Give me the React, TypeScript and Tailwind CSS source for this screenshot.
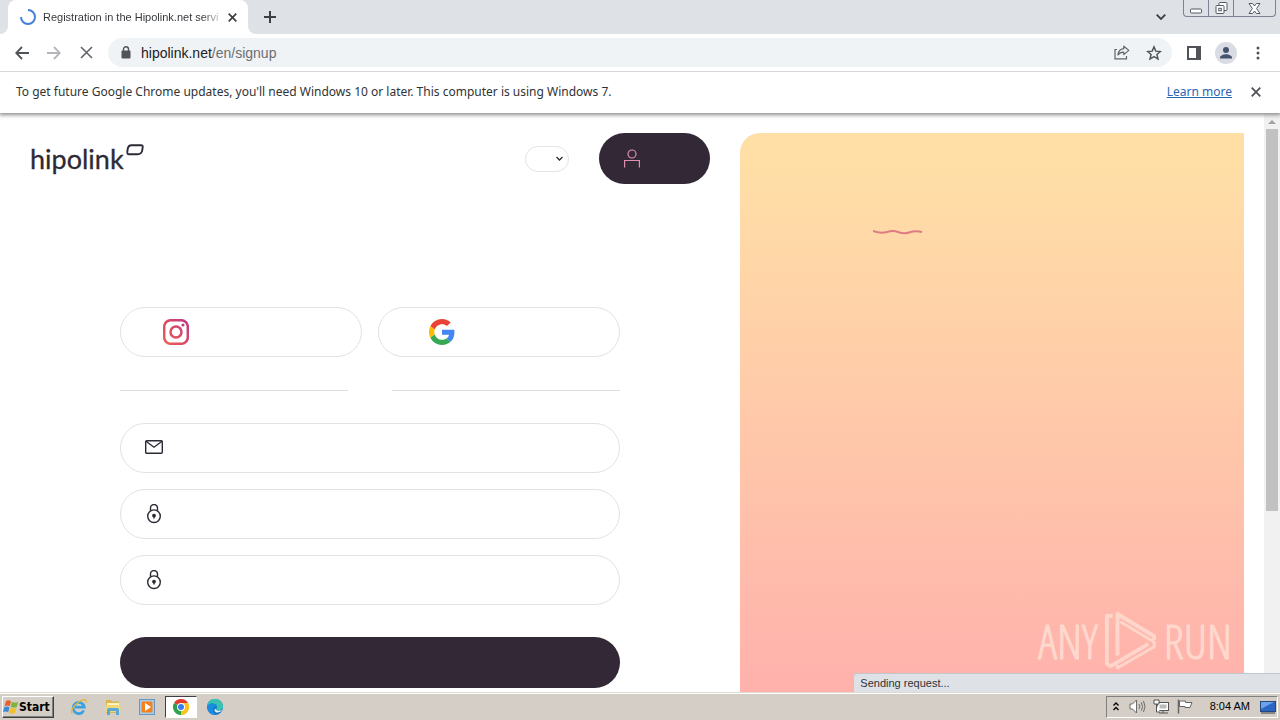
import { useState } from 'react';
import type { ReactNode } from 'react';

const WindowControls = () => (
    <div className="flex h-[17px] self-start rounded-b border border-t-0 border-[#7d8390] text-[#555a63]">
        <button aria-label="Minimize" className="flex w-[25px] items-center justify-center border-r border-[#7d8390]">
            <svg width="13" height="14" viewBox="0 0 13 14" fill="#fff" stroke="currentColor">
                <rect x="0.5" y="8" width="11" height="4" rx="1" />
            </svg>
        </button>
        <button aria-label="Restore" className="flex w-[25px] items-center justify-center border-r border-[#7d8390]">
            <svg width="13" height="14" viewBox="0 0 13 14" fill="#fff" stroke="currentColor">
                <rect x="4" y="1.5" width="8" height="8" rx="1" />
                <rect x="1" y="4.5" width="8" height="8" rx="1" />
                <rect x="3.8" y="7.3" width="2.5" height="2.5" />
            </svg>
        </button>
        <button aria-label="Close window" className="flex w-[41px] items-center justify-center">
            <svg width="13" height="13" viewBox="0 0 13 13" fill="#fff" stroke="currentColor">
                <path d="M1 1.5h3.6L6.5 4l1.9-2.5H12L8.6 6.5l3.4 5H8.4L6.5 9l-1.9 2.5H1l3.4-5z" />
            </svg>
        </button>
    </div>
);

const TabStrip = () => (
    <div className="flex h-[34px] bg-[#dee1e6] pr-1 pl-2">
        <div className="relative flex w-60 items-center rounded-t-lg bg-white pr-2 pl-3">
            <svg className="absolute bottom-0 -left-2" width="8" height="8" viewBox="0 0 8 8" fill="#fff">
                <path d="M8 0v8H0a8 8 0 0 0 8-8z" />
            </svg>
            <svg className="absolute -right-2 bottom-0" width="8" height="8" viewBox="0 0 8 8" fill="#fff">
                <path d="M0 0v8h8a8 8 0 0 1-8-8z" />
            </svg>
            <svg width="16" height="16" viewBox="0 0 16 16" fill="none" stroke="#4480d8" strokeWidth="2">
                <path d="M8 1a7 7 0 1 1-7 7" />
            </svg>
            <span className="ml-[7px] flex-1 bg-linear-to-r from-[#303336] from-90% to-[#303336]/20 bg-clip-text text-[11px] whitespace-nowrap text-transparent">
                Registration in the Hipolink.net servi
            </span>
            <button aria-label="Close tab" className="ml-1 flex h-4 w-4 shrink-0 items-center justify-center">
                <svg width="9" height="9" viewBox="0 0 9 9" stroke="#3c4043" strokeWidth="1.7">
                    <path d="M0.7 0.7l7.6 7.6M8.3 0.7L0.7 8.3" />
                </svg>
            </button>
        </div>
        <button aria-label="New tab" className="ml-2 flex w-7 items-center justify-center">
            <svg width="12" height="12" viewBox="0 0 12 12" stroke="#3c4043" strokeWidth="2">
                <path d="M6 0v12M0 6h12" />
            </svg>
        </button>
        <button aria-label="Search tabs" className="mr-2 ml-auto flex w-7 items-center justify-center">
            <svg width="10" height="6" viewBox="0 0 10 6" fill="none" stroke="#3c4043" strokeWidth="1.8">
                <path d="M0.7 0.7L5 5l4.3-4.3" />
            </svg>
        </button>
        <WindowControls />
    </div>
);

const ToolButton = ({ label, children }: { label: string; children: ReactNode }) => (
    <button aria-label={label} className="flex h-7 w-8 shrink-0 items-center justify-center">
        {children}
    </button>
);

const Toolbar = () => (
    <div className="relative z-20 flex h-[37px] items-center bg-white px-1.5">
        <ToolButton label="Back">
            <svg width="14" height="14" viewBox="0 0 14 14" fill="none" stroke="#505357" strokeWidth="1.8">
                <path d="M14 7H1.5M7 1L1.2 7 7 13" />
            </svg>
        </ToolButton>
        <ToolButton label="Forward">
            <svg width="14" height="14" viewBox="0 0 14 14" fill="none" stroke="#b4b6b9" strokeWidth="1.8">
                <path d="M0 7h12.5M7 1l5.8 6L7 13" />
            </svg>
        </ToolButton>
        <ToolButton label="Stop">
            <svg width="13" height="13" viewBox="0 0 13 13" stroke="#606367" strokeWidth="1.6">
                <path d="M1 1l11 11M12 1L1 12" />
            </svg>
        </ToolButton>
        <div className="mx-1.5 flex h-[29px] flex-1 items-center rounded-full bg-[#f0f3f5] pr-0.5 pl-[13px]">
            <svg width="10" height="13" viewBox="0 0 10 13">
                <rect x="0.5" y="4.5" width="9" height="8" rx="1" fill="#505357" />
                <path d="M2.5 5V3.2a2.5 2.5 0 0 1 5 0V5" fill="none" stroke="#505357" strokeWidth="1.4" />
            </svg>
            <div className="ml-2.5 flex-1 text-sm text-[#6a6e73]">
                <span className="text-[#202124]">hipolink.net</span>/en/signup
            </div>
            <ToolButton label="Share">
                <svg width="16" height="15" viewBox="0 0 16 15" fill="none" stroke="#606368" strokeWidth="1.2">
                    <path d="M3 4.5H1v9.3h11.5V11" />
                    <path d="M9.8 1.2L14.8 5.4 9.8 9.6V7.2C7 7.2 5.2 8 3.9 10 4.2 6.6 6.2 4 9.8 3.6z" strokeLinejoin="round" />
                </svg>
            </ToolButton>
            <ToolButton label="Bookmark this tab">
                <svg width="16" height="16" viewBox="0 0 24 24" fill="none" stroke="#505357" strokeWidth="2.2">
                    <path d="M12 2.8l2.7 6.4 6.9.6-5.2 4.5 1.6 6.8-6-3.6-6 3.6 1.6-6.8L2.4 9.8l6.9-.6z" />
                </svg>
            </ToolButton>
        </div>
        <ToolButton label="Side panel">
            <svg width="14" height="14" viewBox="0 0 14 14">
                <rect x="1" y="1" width="12" height="12" fill="none" stroke="#505357" strokeWidth="2" />
                <rect x="9" y="1" width="4" height="12" fill="#505357" />
            </svg>
        </ToolButton>
        <ToolButton label="Profile">
            <svg width="22" height="22" viewBox="0 0 22 22">
                <circle cx="11" cy="11" r="11" fill="#d9dde3" />
                <circle cx="11" cy="8" r="3" fill="#46536f" />
                <path d="M5 16.5v-1c0-2 3.5-3.3 6-3.3s6 1.3 6 3.3v1z" fill="#46536f" />
            </svg>
        </ToolButton>
        <ToolButton label="Menu">
            <svg width="4" height="14" viewBox="0 0 4 14" fill="#505357">
                <circle cx="2" cy="2" r="1.5" />
                <circle cx="2" cy="7" r="1.5" />
                <circle cx="2" cy="12" r="1.5" />
            </svg>
        </ToolButton>
    </div>
);

const InfoBar = ({ onClose }: { onClose: () => void }) => (
    <div className="relative z-10 flex h-[42px] items-center border-t border-[#d5d7da] bg-white px-4 pb-0.5 font-['Noto_Sans',sans-serif] text-xs text-[#303336] shadow-[0_1px_4px_1px_#8c8c8c]">
        <p>To get future Google Chrome updates, you'll need Windows 10 or later. This computer is using Windows 7.</p>
        <a href="#learn" className="ml-auto text-[#2a66b4] underline">
            Learn more
        </a>
        <button aria-label="Dismiss" onClick={onClose} className="ml-4 flex h-4 w-4 items-center justify-center">
            <svg width="10" height="10" viewBox="0 0 10 10" stroke="#505357" strokeWidth="1.8">
                <path d="M0.7 0.7l8.6 8.6M9.3 0.7L0.7 9.3" />
            </svg>
        </button>
    </div>
);

const Logo = () => (
    <a href="#home" className="flex items-start text-[#2d2a35]">
        <span className="font-['Lato',sans-serif] text-[27px] leading-[30px] [-webkit-text-stroke:0.3px]">hipolink</span>
        <svg className="ml-0.5" width="18" height="12" viewBox="0 0 18 12" fill="none" stroke="currentColor" strokeWidth="1.9">
            <path d="M5.5 1.2H15q2 0 1.7 2l-.4 2.8q-.5 4.2-4.8 4.2H3q-2 0-1.7-2l.3-2.6Q2 1.2 5.5 1.2z" />
        </svg>
    </a>
);

const PageHeader = () => (
    <header className="flex items-center px-[30px]">
        <Logo />
        <div className="relative ml-auto">
            <select
                aria-label="Language"
                className="block h-[26px] w-11 appearance-none rounded-full border border-[#e4e4e6] bg-white outline-none"
            />
            <svg
                className="pointer-events-none absolute top-2.5 right-1.5"
                width="7"
                height="6"
                viewBox="0 0 7 6"
                fill="none"
                stroke="#2d2a35"
                strokeWidth="1.3"
            >
                <path d="M0.5 1l3 3 3-3" />
            </svg>
        </div>
        <button aria-label="Log in" className="ml-[30px] flex h-[51px] w-[111px] items-center rounded-full bg-[#332836] px-[25px]">
            <svg width="16" height="20" viewBox="0 0 16 20" fill="none" stroke="#e08fae" strokeWidth="1.2">
                <circle cx="8" cy="5" r="4" />
                <path d="M0.6 18.5v-7h14.8v7" />
            </svg>
        </button>
    </header>
);

const InstagramIcon = () => (
    <svg width="26" height="26" viewBox="0 0 26 26" fill="none" stroke="url(#insta)" strokeWidth="2.5">
        <defs>
            <linearGradient id="insta" x1="0" y1="26" x2="26" y2="0" gradientUnits="userSpaceOnUse">
                <stop stopColor="#ec6255" />
                <stop offset="0.5" stopColor="#dc4865" />
                <stop offset="1" stopColor="#b8388c" />
            </linearGradient>
        </defs>
        <rect x="1.2" y="1.2" width="23.6" height="23.6" rx="6.5" />
        <circle cx="13" cy="13" r="5.5" />
        <circle cx="20" cy="6" r="1.6" fill="#c43c80" stroke="none" />
    </svg>
);

const GoogleIcon = () => (
    <svg width="26" height="26" viewBox="0 0 48 48">
        <path fill="#ea4335" d="M24 9.5c3.54 0 6.71 1.22 9.21 3.6l6.85-6.85C35.9 2.38 30.47 0 24 0 14.62 0 6.51 5.38 2.56 13.22l7.98 6.19C12.43 13.72 17.74 9.5 24 9.5z" />
        <path fill="#4285f4" d="M46.98 24.55c0-1.57-.15-3.09-.38-4.55H24v9.02h12.94c-.58 2.96-2.26 5.48-4.78 7.18l7.73 6c4.51-4.18 7.09-10.36 7.09-17.65z" />
        <path fill="#fbbc05" d="M10.53 28.59c-.48-1.45-.76-2.99-.76-4.59s.27-3.14.76-4.59l-7.98-6.19C.92 16.46 0 20.12 0 24c0 3.88.92 7.54 2.56 10.78l7.97-6.19z" />
        <path fill="#34a853" d="M24 48c6.48 0 11.93-2.13 15.89-5.81l-7.73-6c-2.15 1.45-4.92 2.3-8.16 2.3-6.26 0-11.57-4.22-13.47-9.91l-7.98 6.19C6.51 42.62 14.62 48 24 48z" />
    </svg>
);

const MailIcon = () => (
    <svg width="18" height="16" viewBox="0 0 18 16" fill="none" stroke="#2d2a35" strokeWidth="1.4">
        <rect x="0.7" y="0.7" width="16.6" height="12.6" rx="1" />
        <path d="M1 1.2l8 6 8-6" />
    </svg>
);

const LockIcon = () => (
    <svg width="18" height="20" viewBox="0 0 18 20" fill="none" stroke="#2d2a35" strokeWidth="1.4">
        <circle cx="9" cy="12.2" r="6.3" />
        <path d="M5.5 6.7V4a3.5 3.5 0 0 1 7 0v2.7" />
        <circle cx="9" cy="11.6" r="1.9" fill="#2d2a35" stroke="none" />
        <path d="M9 12v2.6" />
    </svg>
);

interface FieldProps {
    label: string;
    type: string;
    icon: ReactNode;
}

const Field = ({ label, type, icon }: FieldProps) => (
    <label className="flex h-[50px] items-center gap-4 rounded-full border border-[#e2e2e5] px-6">
        {icon}
        <input type={type} aria-label={label} className="min-w-0 flex-1 outline-none" />
    </label>
);

const SignupForm = () => (
    <form className="mx-auto mt-[123px] flex max-w-[500px] flex-col gap-4" onSubmit={(e) => e.preventDefault()}>
        <div className="grid grid-cols-2 gap-4">
            <button
                type="button"
                aria-label="Instagram"
                className="flex h-[50px] items-center rounded-full border border-[#e2e2e5] px-[42px]"
            >
                <InstagramIcon />
            </button>
            <button
                type="button"
                aria-label="Google"
                className="flex h-[50px] items-center rounded-full border border-[#e2e2e5] px-[50px]"
            >
                <GoogleIcon />
            </button>
        </div>
        <div className="flex h-[34px] items-center gap-11">
            <hr className="flex-1 border-[#dfdfe2]" />
            <hr className="flex-1 border-[#dfdfe2]" />
        </div>
        <Field label="Email" type="email" icon={<MailIcon />} />
        <Field label="Password" type="password" icon={<LockIcon />} />
        <Field label="Repeat password" type="password" icon={<LockIcon />} />
        <button aria-label="Sign up" className="mt-4 h-[51px] rounded-full bg-[#332836]" />
    </form>
);

const Watermark = () => (
    <div className="absolute right-12 bottom-5 flex items-center font-['Noto_Sans_ExtraCondensed_Light','Open_Sans_Condensed_Light','Noto_Sans_ExtraCondensed','Liberation_Sans_Narrow','Open_Sans_Condensed','Liberation_Sans',sans-serif] text-[47px] leading-[62px] font-light text-[#ffe0d6]/75 [-webkit-text-stroke:1px]">
        <span>ANY</span>
        <svg className="mx-1.5" width="54" height="62" viewBox="0 0 56 62" fill="none" stroke="currentColor" strokeWidth="4">
            <path d="M9 5H3v50l4 2 39-23" strokeLinejoin="round" />
            <path d="M14 46V3l38 23v4" strokeLinejoin="round" />
            <path d="M14 56v3L52 37v-5L17 11" strokeLinejoin="round" strokeWidth="3" />
        </svg>
        <span>RUN</span>
    </div>
);

const Scrollbar = () => (
    <div className="flex w-4 shrink-0 flex-col items-center bg-[#f1f1f1]">
        <svg className="mt-[7px] mb-[5px]" width="8" height="4" viewBox="0 0 8 4" fill="#a3a3a3">
            <path d="M0 4l4-4 4 4z" />
        </svg>
        <div className="h-[66%] w-3 bg-[#c1c1c1]" />
    </div>
);

const TaskButton = ({ label, active, children }: { label: string; active?: boolean; children: ReactNode }) => (
    <button
        aria-label={label}
        className={
            active
                ? 'flex h-[22px] w-8 items-center justify-center border border-t-[#404040] border-r-white border-b-white border-l-[#404040] bg-white'
                : 'flex h-[22px] w-8 items-center justify-center'
        }
    >
        {children}
    </button>
);

const Taskbar = () => (
    <footer className="flex h-7 shrink-0 items-center border-t border-[#dcd9d3] bg-[#d4cec6] px-0.5 text-[11px] text-black shadow-[inset_0_1px_0_#fff]">
        <button className="flex h-[22px] w-[52px] items-center border border-t-white border-r-[#404040] border-b-[#404040] border-l-white font-['DejaVu_Sans_Condensed','Noto_Sans',sans-serif] text-xs font-bold shadow-[inset_-1px_-1px_0_#808080]">
            <svg width="16" height="16" viewBox="0 0 16 16">
                <path d="M3 2q2.5-1.5 5 .2L6.8 7.3Q4.5 5.8 1.6 7.2z" fill="#e8602c" />
                <path d="M8.9 2.7q3 1.7 6.3.2l-1.5 5q-3 1.5-6-.1z" fill="#7cb53c" />
                <path d="M1.3 8.2q2.7-1.4 5.2.1l-1.3 5Q3 11.9 0 13.2z" fill="#3b8ad6" />
                <path d="M7.4 8.8q3 1.5 6 .2l-1.4 5q-3 1.4-5.9-.2z" fill="#f4bd2b" />
            </svg>
            Start
        </button>
        <nav className="ml-[9px] flex gap-0.5">
            <TaskButton label="Internet Explorer">
                <svg width="18" height="18" viewBox="0 0 18 18" fill="none">
                    <path d="M13.8 12.5A5.6 5.6 0 1 1 14.3 9.2H5" stroke="#3aa0e0" strokeWidth="2.7" />
                    <path d="M2.5 15.5C-1 13.5 6 4 13 1.8c3-.9 4 .7 2.8 3" stroke="#e3b735" strokeWidth="1.3" />
                </svg>
            </TaskButton>
            <TaskButton label="File Explorer">
                <svg width="18" height="18" viewBox="0 0 18 18">
                    <path d="M2 2h5l1 1.5h7V15H2z" fill="#d9b650" />
                    <path d="M3 5h12v4H3z" fill="#fff3b8" />
                    <path d="M1.5 7h15v7h-15z" fill="#f0d67c" />
                    <path d="M3 17v-5q0-2 2-2h8q2 0 2 2v5h-3v-4H6v4z" fill="#58a9d6" />
                </svg>
            </TaskButton>
            <TaskButton label="Media Player">
                <svg width="16" height="16" viewBox="0 0 16 16">
                    <rect x="0.5" y="0.5" width="15" height="15" fill="#a9cceb" stroke="#6796c0" />
                    <rect x="2.5" y="2.5" width="11" height="11" rx="1" fill="#f58220" />
                    <path d="M6 4v8l6-4z" fill="#fff" />
                </svg>
            </TaskButton>
            <TaskButton label="Google Chrome" active>
                <svg width="16" height="16" viewBox="0 0 16 16">
                    <path d="M8 8L1.07 4A8 8 0 0 1 14.93 4z" fill="#e33b2e" />
                    <path d="M8 8l6.93-4A8 8 0 0 1 8 16z" fill="#fcc31e" />
                    <path d="M8 8v8A8 8 0 0 1 1.07 4z" fill="#2da14c" />
                    <path d="M8 4h6.93A8 8 0 0 1 8 16l3.5-6z" fill="#fcc31e" />
                    <circle cx="8" cy="8" r="4" fill="#fff" />
                    <circle cx="8" cy="8" r="3" fill="#3b7ded" />
                </svg>
            </TaskButton>
            <TaskButton label="Microsoft Edge">
                <svg width="16" height="16" viewBox="0 0 16 16">
                    <circle cx="8" cy="8" r="8" fill="#1672c4" />
                    <path d="M0 8a8 8 0 0 1 16-.5c0 3-2.5 4-4.5 4-1.5 0-2.5-.5-2.5-1 0-.7 1-1 1-2.5C10 5.5 7.5 4.5 5 4.5 2.5 4.5.5 6 0 8z" fill="#38c3b0" />
                    <path d="M0 8c.5-2 2.5-3.5 5-3.5S10 5.5 10 8c-1-1-4-.5-4 2.5 0 3 2 4.500 4 5A8 8 0 0 1 0 8z" fill="#1b8de0" />
                    <path d="M9 10.5c0 1 3 2 6 .5-1 1.5-2.5 2.5-4.5 2.5-2.5 0-3.500-2-2.500-4z" fill="#e8f3fa" />
                </svg>
            </TaskButton>
        </nav>
        <div className="ml-auto flex h-[22px] items-center border border-t-[#808080] border-r-white border-b-white border-l-[#808080] pl-1.5">
            <svg width="6" height="9" viewBox="0 0 6 9" fill="none" stroke="#000" strokeWidth="1.3">
                <path d="M0.5 3.5L3 1l2.5 2.5M0.5 8L3 5.5 5.5 8" />
            </svg>
            <svg className="ml-2.5" width="17" height="15" viewBox="0 0 17 15" fill="#fff" stroke="#6b6b6b">
                <path d="M1 5h2.5L7.5 1v13l-4-4H1z" />
                <path d="M10 5q1.5 2.5 0 5M12.3 3.3q2.5 4.2 0 8.4M14.5 2q3 5.5 0 11" fill="none" />
            </svg>
            <svg className="ml-[7px]" width="17" height="15" viewBox="0 0 17 15" fill="#fff" stroke="#555">
                <rect x="4.5" y="3.5" width="11" height="8" />
                <rect x="6.5" y="5.5" width="7" height="4" fill="#bbb" stroke="none" />
                <path d="M6 14h9M10 12v2M1 1v4h5V1zM3.5 5v8H7" />
            </svg>
            <svg className="ml-[7px]" width="17" height="15" viewBox="0 0 17 15" fill="#fff" stroke="#666">
                <path d="M2.5 2h6v1.5H15l-2 5H8V7.5H2.5z" />
                <path d="M1.5 0.5v14" strokeWidth="1.5" />
            </svg>
            <time className="ml-4">8:04 AM</time>
            <svg className="mr-px ml-2.5" width="16" height="14" viewBox="0 0 16 14">
                <rect x="0.5" y="1.5" width="15" height="10" fill="#2b66c4" stroke="#24497f" />
                <path d="M1 2h13L1 9z" fill="#6ba2ea" />
                <path d="M1 13h14" stroke="#3a3f49" />
            </svg>
        </div>
    </footer>
);

export default function App() {
    const [showInfo, setShowInfo] = useState(true);

    return (
        <div className="flex h-screen flex-col overflow-hidden bg-white font-['Liberation_Sans',sans-serif]">
            <TabStrip />
            <Toolbar />
            {showInfo && <InfoBar onClose={() => setShowInfo(false)} />}
            <div className="relative flex min-h-0 flex-1">
                <main className="flex min-w-0 flex-1 overflow-hidden pt-5 pr-5">
                    <section className="min-w-0 flex-1">
                        <PageHeader />
                        <SignupForm />
                    </section>
                    <aside className="w-[504px] rounded-tl-[20px] bg-linear-to-b from-[#ffdfa6] from-5% to-[#ffb1ac]">
                        <svg className="mt-[97px] ml-[133px]" width="50" height="6" viewBox="0 0 50 6" fill="none" stroke="#dd7c82" strokeWidth="2">
                            <path d="M0 1C5 3 9 3.5 14 2s7-1.5 11 0 7 2 11 .5 9-1.5 13-.5" />
                        </svg>
                    </aside>
                </main>
                <Scrollbar />
                <Watermark />
                <div className="absolute right-0 bottom-0 h-[19px] w-1/3 min-w-max rounded-tl border-t border-l border-[#c3c6ca] bg-[#dee1e6] px-1.5 text-[11px] leading-[18px] text-[#303336]">
                    Sending request...
                </div>
            </div>
            <Taskbar />
        </div>
    );
}
